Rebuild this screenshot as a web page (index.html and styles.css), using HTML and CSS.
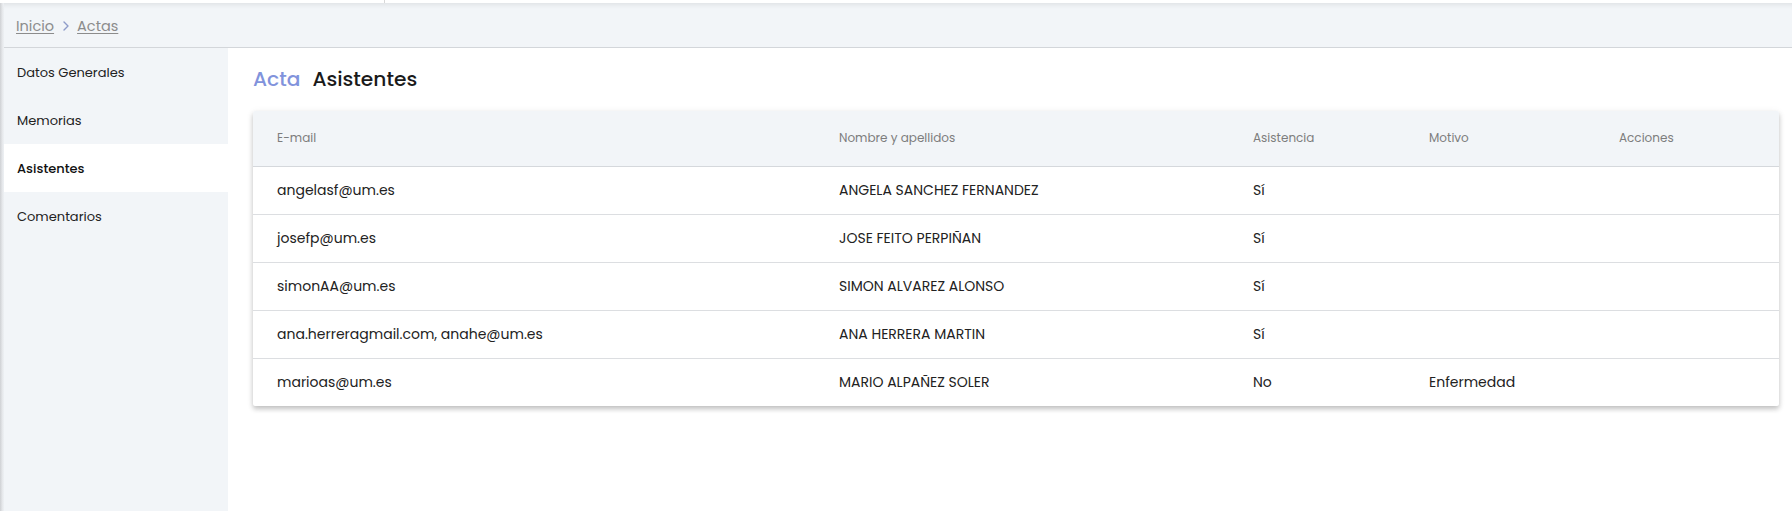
FILE: index.html
```html
<!DOCTYPE html>
<html lang="es">
<head>
<meta charset="utf-8">
<title>Acta - Asistentes</title>
<link rel="stylesheet" href="styles.css">
</head>
<body>
<div class="topstrip"><span class="topstrip-divider"></span></div>
<div class="frame">
  <div class="edge"></div>
  <div class="app">
    <nav class="breadcrumb">
      <a href="#" class="crumb">Inicio</a>
      <svg class="chev" width="12" height="12" viewBox="0 0 12 12"><path d="M4 2l4 4-4 4" fill="none" stroke="currentColor" stroke-width="1.4" stroke-linecap="round" stroke-linejoin="round"/></svg>
      <a href="#" class="crumb">Actas</a>
    </nav>
    <div class="body">
      <aside class="sidebar">
        <a href="#" class="side-item">Datos Generales</a>
        <a href="#" class="side-item">Memorias</a>
        <a href="#" class="side-item active">Asistentes</a>
        <a href="#" class="side-item">Comentarios</a>
      </aside>
      <main class="main">
        <h1 class="title"><span class="title-pre">Acta</span><span class="title-main">Asistentes</span></h1>
        <div class="card">
          <table class="grid">
            <colgroup>
              <col class="c-email"><col class="c-name"><col class="c-asis"><col class="c-mot"><col class="c-acc">
            </colgroup>
            <thead>
              <tr><th>E-mail</th><th>Nombre y apellidos</th><th>Asistencia</th><th>Motivo</th><th>Acciones</th></tr>
            </thead>
            <tbody>
              <tr><td>angelasf@um.es</td><td>ANGELA SANCHEZ FERNANDEZ</td><td>Sí</td><td></td><td></td></tr>
              <tr><td>josefp@um.es</td><td>JOSE FEITO PERPIÑAN</td><td>Sí</td><td></td><td></td></tr>
              <tr><td>simonAA@um.es</td><td>SIMON ALVAREZ ALONSO</td><td>Sí</td><td></td><td></td></tr>
              <tr><td>ana.herreragmail.com, anahe@um.es</td><td>ANA HERRERA MARTIN</td><td>Sí</td><td></td><td></td></tr>
              <tr><td>marioas@um.es</td><td>MARIO ALPAÑEZ SOLER</td><td>No</td><td>Enfermedad</td><td></td></tr>
            </tbody>
          </table>
        </div>
      </main>
    </div>
  </div>
</div>
</body>
</html>
```
FILE: styles.css
```css
* { box-sizing: border-box; }
html, body { margin: 0; padding: 0; height: 100%; }
body {
  font-family: "Poppins", "Open Sans", "Noto Sans", sans-serif;
  color: #222;
  background: #fff;
  display: flex;
  flex-direction: column;
  overflow: hidden;
}
.topstrip {
  height: 3px;
  background: #fff;
  display: flex;
  flex-shrink: 0;
}
.topstrip-divider {
  margin-left: 384px;
  width: 1px;
  background: #d8d8d8;
}
.frame {
  flex: 1;
  display: flex;
  min-height: 0;
}
.edge {
  width: 4px;
  flex-shrink: 0;
  background: linear-gradient(to right, #cfd1d4, #e6e8eb 60%, #eef1f4);
}
.app {
  flex: 1;
  display: flex;
  flex-direction: column;
  min-width: 0;
}
.breadcrumb {
  height: 45px;
  flex-shrink: 0;
  background: #f2f5f8;
  border-bottom: 1px solid #d3d6da;
  box-shadow: inset 0 6px 5px -4px rgba(0,0,0,0.08);
  display: flex;
  align-items: center;
  padding: 2px 0 0 12px;
}
.crumb {
  color: #8c8c8c;
  font-size: 14.5px;
  text-decoration: underline;
  text-underline-offset: 2px;
}
.chev {
  color: #8e9bc9;
  margin: 0 5px 0 6px;
}
.body {
  flex: 1;
  display: flex;
  min-height: 0;
}
.sidebar {
  width: 224px;
  flex-shrink: 0;
  background: #f2f5f8;
  display: flex;
  flex-direction: column;
}
.side-item {
  height: 48px;
  display: flex;
  align-items: center;
  padding: 2px 0 0 13px;
  font-size: 13px;
  color: #222;
  text-decoration: none;
}
.side-item.active {
  background: #fff;
  color: #111;
  font-weight: 500;
}
.main {
  flex: 1;
  padding: 16px 13px 0 25px;
  min-width: 0;
}
.title {
  margin: 0 0 17px 0;
  font-size: 20.2px;
  font-weight: 500;
  line-height: 30px;
  display: flex;
  gap: 12px;
}
.title-pre { color: #8193dc; }
.title-main { color: #1a1a1a; }
.card {
  background: #fff;
  box-shadow: 0 3px 5px rgba(0,0,0,0.22), 0 1px 8px rgba(0,0,0,0.06);
  border-radius: 2px;
  overflow: hidden;
}
.grid {
  width: 100%;
  border-collapse: collapse;
  table-layout: fixed;
}
.c-email { width: 562px; }
.c-name { width: 414px; }
.c-asis { width: 176px; }
.c-mot { width: 190px; }
.c-acc { width: auto; }
.grid th {
  height: 55px;
  background: #f2f5f8;
  color: #7d7d7d;
  font-size: 12px;
  font-weight: 400;
  text-align: left;
  padding: 0 0 0 24px;
  border-bottom: 1px solid #d5d8dc;
}
.grid td {
  height: 48px;
  font-size: 14px;
  color: #222;
  padding: 0 0 0 24px;
  border-bottom: 1px solid #dcdee1;
  white-space: nowrap;
}
.grid tbody tr:last-child td { border-bottom: none; }
```
